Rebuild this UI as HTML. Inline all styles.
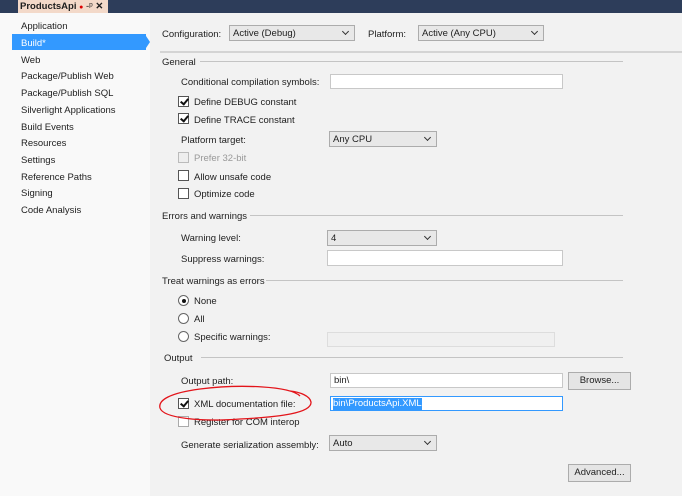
<!DOCTYPE html>
<html><head><style>
*{margin:0;padding:0;box-sizing:border-box}
body{width:682px;height:496px;position:relative;overflow:hidden;background:#f2f2f2;font-family:"Liberation Sans",sans-serif;font-size:9.5px;color:#1e1e1e}
.a{position:absolute;white-space:nowrap}
.lbl{line-height:12px;margin-top:2px}
.box{position:absolute;background:#fff;border:1px solid #c8c8c8}
.dd{position:absolute;background:#e8e8e8;border:1px solid #acacac;padding-left:3px;line-height:15px}
.dd:after{content:"";position:absolute;right:6px;top:3px;width:4px;height:4px;border-right:1.3px solid #333;border-bottom:1.3px solid #333;transform:rotate(45deg)}
.cb{position:absolute;width:11px;height:11px;border:1px solid #555;background:#fff}
.cb.c:after{content:"";position:absolute;left:3px;top:0px;width:3px;height:6px;border-right:2px solid #111;border-bottom:2px solid #111;transform:rotate(40deg)}
.rb{position:absolute;width:11px;height:11px;border:1px solid #666;border-radius:50%;background:#fff}
.sep{position:absolute;height:1px;background:#c4c4c4}
.nav{position:absolute;left:21px}
.btn{position:absolute;border:1px solid #acacac;background:#e5e5e5;text-align:center;line-height:16px}
</style></head><body>
<div class="a" style="left:0;top:0;width:682px;height:13px;background:#2d3d5a"></div>
<div class="a" style="left:18px;top:0;width:90px;height:13px;background:#f3d9c9;font-weight:bold;font-size:9.5px;line-height:13px;padding-left:2px">ProductsApi <span style="color:#d00;font-size:7px">●</span> <span style="font-weight:normal">-ᵖ</span> ✕</div>
<div class="a" style="left:0;top:13px;width:150px;height:483px;background:#f9f9f9"></div>
<div class="a" style="left:12px;top:34px;width:134px;height:16px;background:#3399ff"></div>
<div class="a" style="left:146px;top:36px;width:0;height:0;border-top:6px solid transparent;border-bottom:6px solid transparent;border-left:4px solid #3399ff"></div>
<div class="nav a lbl" style="top:19px">Application</div>
<div class="nav a lbl" style="top:36px;color:#fff">Build*</div>
<div class="nav a lbl" style="top:53px">Web</div>
<div class="nav a lbl" style="top:69px">Package/Publish Web</div>
<div class="nav a lbl" style="top:86px">Package/Publish SQL</div>
<div class="nav a lbl" style="top:103px">Silverlight Applications</div>
<div class="nav a lbl" style="top:120px">Build Events</div>
<div class="nav a lbl" style="top:136px">Resources</div>
<div class="nav a lbl" style="top:153px">Settings</div>
<div class="nav a lbl" style="top:170px">Reference Paths</div>
<div class="nav a lbl" style="top:186px">Signing</div>
<div class="nav a lbl" style="top:203px">Code Analysis</div>

<div class="a lbl" style="left:162px;top:27px">Configuration:</div>
<div class="dd" style="left:229px;top:25px;width:126px;height:16px">Active (Debug)</div>
<div class="a lbl" style="left:368px;top:27px">Platform:</div>
<div class="dd" style="left:418px;top:25px;width:126px;height:16px">Active (Any CPU)</div>
<div class="sep" style="left:160px;top:51px;width:522px;height:2px;background:#d4d4d4"></div>

<div class="a lbl" style="left:162px;top:55px">General</div>
<div class="sep" style="left:200px;top:61px;width:423px"></div>
<div class="a lbl" style="left:181px;top:75px">Conditional compilation symbols:</div>
<div class="box" style="left:330px;top:74px;width:233px;height:15px"></div>
<div class="cb c" style="left:178px;top:96px"></div><div class="a lbl" style="left:194px;top:95px">Define DEBUG constant</div>
<div class="cb c" style="left:178px;top:113px"></div><div class="a lbl" style="left:194px;top:113px">Define TRACE constant</div>
<div class="a lbl" style="left:181px;top:133px">Platform target:</div>
<div class="dd" style="left:329px;top:131px;width:108px;height:16px">Any CPU</div>
<div class="cb" style="left:178px;top:152px;border-color:#bbb;background:#eee"></div><div class="a lbl" style="left:194px;top:151px;color:#999">Prefer 32-bit</div>
<div class="cb" style="left:178px;top:170px"></div><div class="a lbl" style="left:194px;top:170px">Allow unsafe code</div>
<div class="cb" style="left:178px;top:188px"></div><div class="a lbl" style="left:194px;top:187px">Optimize code</div>

<div class="a lbl" style="left:162px;top:209px">Errors and warnings</div>
<div class="sep" style="left:250px;top:215px;width:373px"></div>
<div class="a lbl" style="left:181px;top:231px">Warning level:</div>
<div class="dd" style="left:327px;top:230px;width:110px;height:16px">4</div>
<div class="a lbl" style="left:181px;top:252px">Suppress warnings:</div>
<div class="box" style="left:327px;top:250px;width:236px;height:16px"></div>

<div class="a lbl" style="left:162px;top:274px">Treat warnings as errors</div>
<div class="sep" style="left:266px;top:280px;width:357px"></div>
<div class="rb" style="left:178px;top:295px"><div style="position:absolute;left:2.5px;top:2.5px;width:4px;height:4px;border-radius:50%;background:#111"></div></div>
<div class="a lbl" style="left:194px;top:294px">None</div>
<div class="rb" style="left:178px;top:313px"></div><div class="a lbl" style="left:194px;top:312px">All</div>
<div class="rb" style="left:178px;top:331px"></div><div class="a lbl" style="left:194px;top:330px">Specific warnings:</div>
<div class="box" style="left:327px;top:332px;width:228px;height:15px;background:#f0f0f0;border-color:#ddd"></div>

<div class="a lbl" style="left:164px;top:351px">Output</div>
<div class="sep" style="left:201px;top:357px;width:422px"></div>
<div class="a lbl" style="left:181px;top:374px">Output path:</div>
<div class="box" style="left:330px;top:373px;width:233px;height:15px;padding-left:3px;line-height:14px">bin\</div>
<div class="btn" style="left:568px;top:372px;width:63px;height:18px">Browse...</div>
<div class="cb c" style="left:178px;top:398px"></div><div class="a lbl" style="left:194px;top:397px">XML documentation file:</div>
<div class="box" style="left:330px;top:396px;width:233px;height:15px;border-color:#3399ff;padding:1px 0 0 2px"><span style="background:#3399ff;color:#fff;line-height:12px;display:inline-block">bin\ProductsApi.XML</span></div>
<div class="cb" style="left:178px;top:416px;border-color:#aaa"></div><div class="a lbl" style="left:194px;top:415px">Register for COM interop</div>
<div class="a lbl" style="left:181px;top:438px">Generate serialization assembly:</div>
<div class="dd" style="left:329px;top:435px;width:108px;height:16px">Auto</div>
<div class="btn" style="left:568px;top:464px;width:63px;height:18px">Advanced...</div>

<svg class="a" style="left:0;top:0" width="682" height="496"><path d="M300 396 C290 386 240 384 200 389 C170 393 158 400 160 408 C163 418 200 422 240 419 C280 417 312 413 311 402 C310 396 300 392 290 391" fill="none" stroke="#e3141a" stroke-width="1.3"/></svg>
</body></html>
